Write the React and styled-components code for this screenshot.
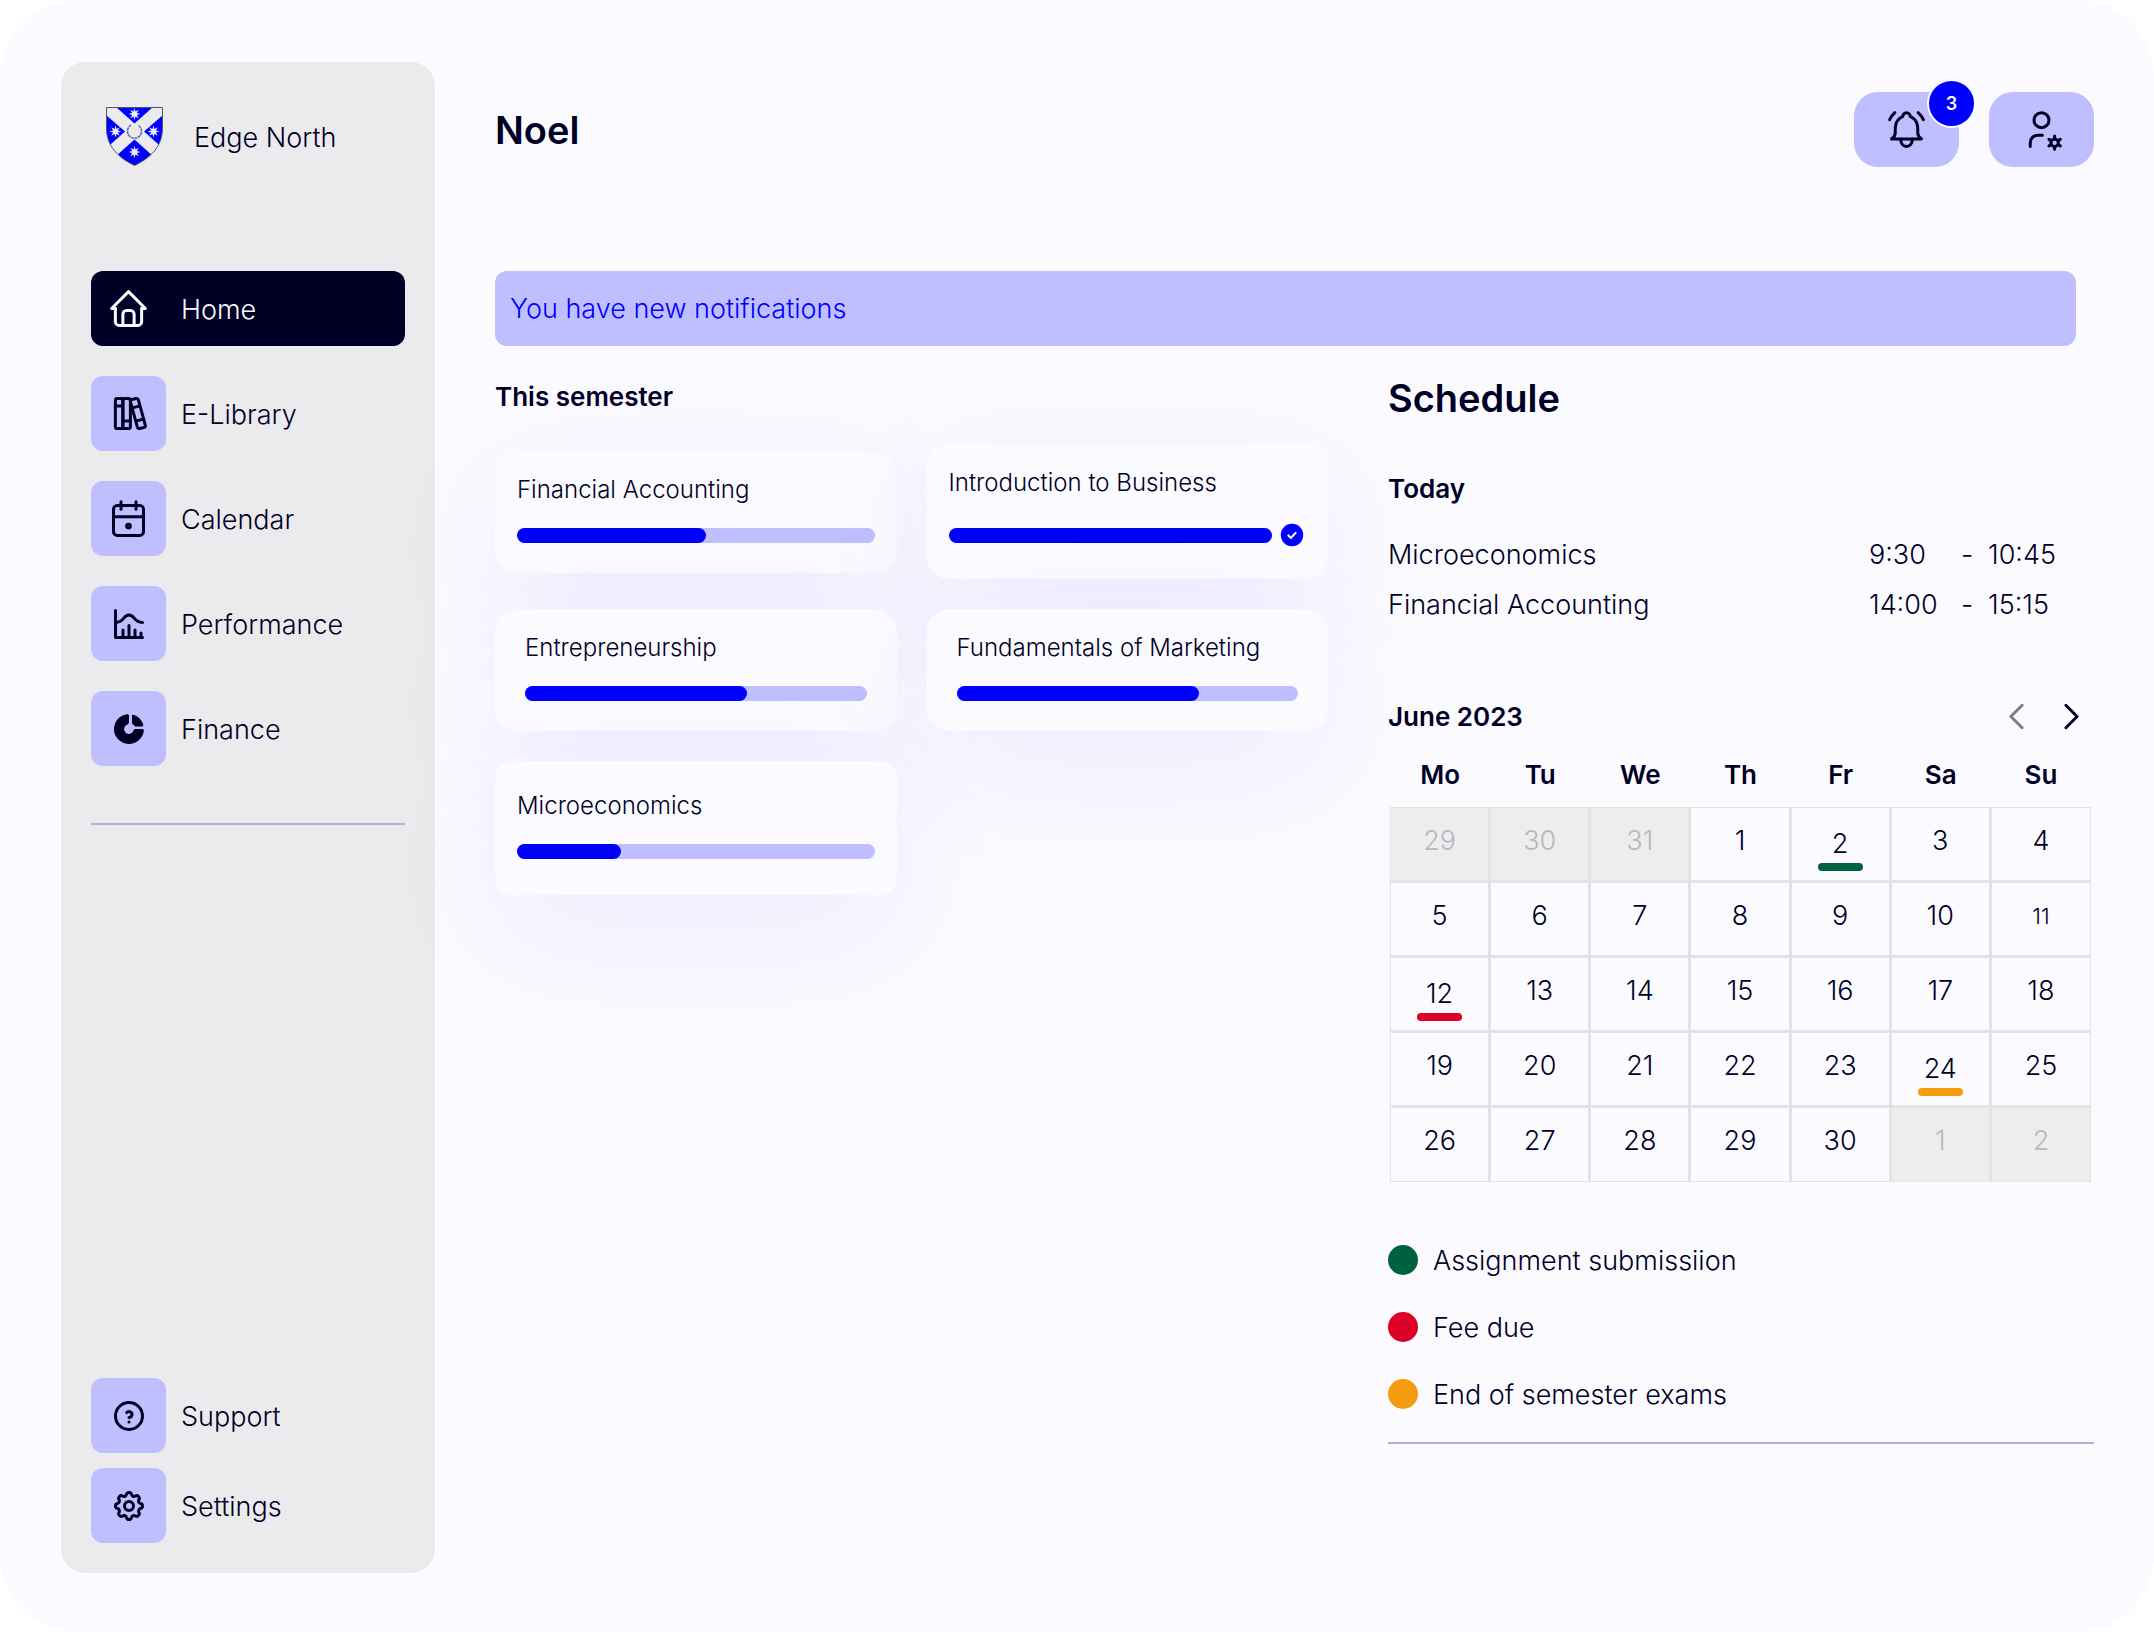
import React from "react";
import styled, { createGlobalStyle, css } from "styled-components";

const c = {
  ink: "#000026",
  blue: "#0000ff",
  lilac: "#bfbfff",
  paper: "#fbfaff",
  grey: "#ebebed",
  cellGrey: "#ededed",
  cellLine: "#e3e3e3",
  muted: "#b7b7c1",
  rule: "#b0b0d6",
  green: "#00613f",
  red: "#db0025",
  amber: "#f39c0f",
};

const GlobalStyle = createGlobalStyle`
  *, *::before, *::after { box-sizing: border-box; }
  body {
    margin: 0;
    background: #ffffff;
    color: ${c.ink};
    font-family: Inter, "Open Sans", sans-serif;
    font-size: 27px;
    line-height: 36px;
    font-weight: 350;
  }
  h1, h2, h3, p, ul { margin: 0; padding: 0; }
  ul { list-style: none; }
  a { color: inherit; text-decoration: none; }
  button { font: inherit; color: inherit; border: 0; padding: 0; cursor: pointer; }
`;

const Page = styled.div`
  display: flex;
  gap: 60px;
  min-height: 100vh;
  padding: 62px 60px 59px 61px;
  border-radius: 76px;
  background: ${c.paper};
`;

const Sidebar = styled.aside`
  display: flex;
  flex-direction: column;
  flex: 0 0 374px;
  padding: 45px 30px 30px;
  border-radius: 24px;
  background: ${c.grey};
`;

const Label = styled.span`
  padding-top: 2px;
`;

const Brand = styled.a`
  display: flex;
  align-items: center;
  gap: 31px;
  margin-bottom: 105px;
  padding-left: 15px;
`;

const NavList = styled.ul`
  display: flex;
  flex-direction: column;
  gap: ${(p) => p.$gap}px;
`;

const NavIcon = styled.span`
  display: grid;
  place-items: center;
  width: 75px;
  height: 75px;
  border-radius: 12px;
  background: ${c.lilac};
`;

const NavLink = styled.a`
  display: flex;
  align-items: center;
  gap: 15px;
  border-radius: 12px;
  ${(p) =>
    p.$active &&
    css`
      background: ${c.ink};
      color: ${c.paper};
      ${NavIcon} {
        background: transparent;
      }
    `}
`;

const Rule = styled.hr`
  width: 100%;
  height: 2px;
  margin: ${(p) => p.$top}px 0 0;
  border: 0;
  background: ${c.rule};
`;

const SidebarFoot = styled.nav`
  margin-top: auto;
`;

const Main = styled.main`
  flex: 1;
  min-width: 0;
  padding-top: 30px;
`;

const Header = styled.header`
  display: flex;
  align-items: center;
  justify-content: space-between;
  margin-bottom: 104px;
`;

const Title = styled.h1`
  font-size: 38px;
  line-height: 44px;
  font-weight: 600;
`;

const Subtitle = styled.h3`
  font-size: 26px;
  line-height: 36px;
  font-weight: 600;
`;

const Actions = styled.div`
  display: flex;
  gap: 30px;
`;

const ActionButton = styled.button`
  position: relative;
  display: grid;
  place-items: center;
  width: 105px;
  height: 75px;
  border-radius: 24px;
  background: ${c.lilac};
`;

const Badge = styled.span`
  position: absolute;
  top: -13px;
  right: -17px;
  display: grid;
  place-items: center;
  width: 49px;
  height: 49px;
  border: 2px solid ${c.paper};
  border-radius: 50%;
  background: ${c.blue};
  color: ${c.paper};
  font-size: 18px;
  font-weight: 600;
`;

const Banner = styled.p`
  display: flex;
  align-items: center;
  height: 75px;
  margin-right: 18px;
  padding: 0 15px;
  border-radius: 12px;
  background: ${c.lilac};
  color: ${c.blue};
`;

const Content = styled.div`
  display: grid;
  grid-template-columns: minmax(0, 833fr) minmax(0, 706fr);
  gap: 60px;
  align-items: start;
  padding-top: 30px;
`;

const Courses = styled.section`
  padding-top: 3px;
`;

const CourseGrid = styled.div`
  display: grid;
  grid-template-columns: 1fr 1fr;
  align-items: center;
  gap: 30px;
  margin-top: 29px;
`;

const CourseCard = styled.article`
  padding: ${(p) => (p.$tall ? "30px" : "24px")} ${(p) => (p.$inset ? "30px" : "22px")}
    ${(p) => (p.$tall ? "36px" : "30px")};
  border-radius: ${(p) => (p.$tall ? "18px" : "22px")};
  background: ${c.paper};
  box-shadow: 0 36px 135px rgba(0, 0, 255, 0.065);
`;

const CourseName = styled.h3`
  margin-bottom: 23px;
  font-size: 24px;
  line-height: 30px;
  font-weight: 350;
`;

const ProgressRow = styled.div`
  display: flex;
  align-items: center;
  gap: 6px;
`;

const Track = styled.div`
  flex: 1;
  height: 15px;
  border-radius: 8px;
  background: ${c.lilac};
`;

const Fill = styled.div`
  height: 100%;
  border-radius: 8px;
  background: ${c.blue};
`;

const Today = styled.div`
  margin-top: 51px;
`;

const Lessons = styled.ul`
  display: flex;
  flex-direction: column;
  gap: 14px;
  margin-top: 30px;
`;

const Lesson = styled.li`
  display: grid;
  grid-template-columns: 1fr 92px 27px 106px;
`;

const MonthBar = styled.div`
  display: flex;
  align-items: center;
  justify-content: space-between;
  height: 45px;
  margin-top: 71px;
`;

const MonthButtons = styled.div`
  display: flex;
  gap: 10px;
`;

const MonthButton = styled.button`
  display: grid;
  width: 45px;
  height: 45px;
  background: transparent;
  &:disabled {
    color: ${c.ink};
    opacity: 0.5;
    cursor: default;
  }
`;

const CalendarWrap = styled.div`
  padding: 0 3px 0 2px;
`;

const Calendar = styled.table`
  width: 100%;
  table-layout: fixed;
  border-collapse: separate;
  border-spacing: 0;
`;

const WeekDay = styled.th`
  height: 68px;
  padding: 4px 0 0;
  font-size: 26px;
  font-weight: 600;
  text-align: center;
`;

const Day = styled.td`
  height: 75px;
  padding: ${(p) => (p.$marked ? "18px" : "15px")} 0 0;
  border: 1px solid ${c.cellLine};
  border-width: 1px 2px 2px 1px;
  background: ${(p) => (p.$outside ? c.cellGrey : "transparent")};
  color: ${(p) => (p.$outside ? c.muted : c.ink)};
  font-size: ${(p) => (p.$small ? "22px" : "27px")};
  line-height: 36px;
  text-align: center;
  vertical-align: top;
  &:last-child {
    border-right-width: 1px;
  }
  tr:last-child > & {
    border-bottom-width: 1px;
  }
`;

const Marker = styled.span`
  display: block;
  width: 45px;
  height: 8px;
  margin: 1px auto 0;
  border-radius: 4px;
  background: ${(p) => p.$color};
`;

const Legend = styled.ul`
  display: flex;
  flex-direction: column;
  gap: 29px;
  margin-top: 59px;
`;

const LegendItem = styled.li`
  display: flex;
  align-items: center;
  gap: 15px;
  &::before {
    content: "";
    width: 30px;
    height: 30px;
    border-radius: 50%;
    background: ${(p) => p.$color};
  }
`;

const icons = {
  home: ["M5 12H3l9-9 9 9h-2", "M5 12v7a2 2 0 0 0 2 2h10a2 2 0 0 0 2-2v-7", "M9 21v-6a2 2 0 0 1 2-2h2a2 2 0 0 1 2 2v6"],
  books: [
    "M5 5a1 1 0 0 1 1-1h2a1 1 0 0 1 1 1v14a1 1 0 0 1-1 1H6a1 1 0 0 1-1-1z",
    "M9 5a1 1 0 0 1 1-1h2a1 1 0 0 1 1 1v14a1 1 0 0 1-1 1h-2a1 1 0 0 1-1-1z",
    "M5 8h4",
    "M9 16h4",
    "M13.803 4.56l2.184-.53c.562-.135 1.133.19 1.282.732l3.695 13.418a1.02 1.02 0 0 1-.634 1.219l-.133.041-2.184.53c-.562.135-1.133-.19-1.282-.732L13.036 5.82a1.02 1.02 0 0 1 .634-1.219z",
    "M14 9l4-1",
    "M16 16l3.923-.98",
  ],
  calendar: [
    "M4 7a2 2 0 0 1 2-2h12a2 2 0 0 1 2 2v12a2 2 0 0 1-2 2H6a2 2 0 0 1-2-2z",
    "M16 3v4",
    "M8 3v4",
    "M4 11h16",
    "M11 16a1 1 0 1 0 2 0a1 1 0 1 0-2 0",
  ],
  histogram: ["M3 3v18h18", "M20 18v3", "M16 16v5", "M12 13v8", "M8 16v5", "M3 11c6 0 5-5 9-5s3 5 9 5"],
  help: ["M3 12a9 9 0 1 0 18 0a9 9 0 1 0-18 0", "M12 16v.01", "M12 13a2 2 0 0 0 .914-3.782a1.98 1.98 0 0 0-2.414.483"],
  settings: [
    "M10.325 4.317c.426-1.756 2.924-1.756 3.35 0a1.724 1.724 0 0 0 2.573 1.066c1.543-.94 3.31.826 2.37 2.37a1.724 1.724 0 0 0 1.065 2.572c1.756.426 1.756 2.924 0 3.35a1.724 1.724 0 0 0-1.066 2.573c.94 1.543-.826 3.31-2.37 2.37a1.724 1.724 0 0 0-2.572 1.065c-.426 1.756-2.924 1.756-3.35 0a1.724 1.724 0 0 0-2.573-1.066c-1.543.94-3.31-.826-2.37-2.37a1.724 1.724 0 0 0-1.065-2.572c-1.756-.426-1.756-2.924 0-3.35a1.724 1.724 0 0 0 1.066-2.573c-.94-1.543.826-3.31 2.37-2.37c1 .608 2.296.07 2.572-1.065z",
    "M9 12a3 3 0 1 0 6 0a3 3 0 0 0-6 0",
  ],
  bell: [
    "M10 5a2 2 0 0 1 4 0a7 7 0 0 1 4 6v3a4 4 0 0 0 2 3H4a4 4 0 0 0 2-3v-3a7 7 0 0 1 4-6",
    "M9 17v1a3 3 0 0 0 6 0v-1",
    "M21 6.727a11.05 11.05 0 0 0-2.794-3.727",
    "M3 6.727a11.05 11.05 0 0 1 2.792-3.727",
  ],
  userCog: [
    "M8 7a4 4 0 1 0 8 0a4 4 0 0 0-8 0",
    "M6 21v-2a4 4 0 0 1 4-4h2.5",
    "M17 19a2 2 0 1 0 4 0a2 2 0 1 0-4 0",
    "M19 15.5V17",
    "M19 21v1.5",
    "M22.032 17.25l-1.299.75",
    "M17.27 20l-1.3.75",
    "M15.97 17.25l1.3.75",
    "M20.733 20l1.3.75",
  ],
  prev: ["M15 6l-6 6 6 6"],
  next: ["M9 6l6 6-6 6"],
};

function Icon({ name, size = 45, stroke = 1.6 }) {
  return (
    <svg
      width={size}
      height={size}
      viewBox="0 0 24 24"
      fill="none"
      stroke="currentColor"
      strokeWidth={stroke}
      strokeLinecap="round"
      strokeLinejoin="round"
      aria-hidden="true"
    >
      {icons[name].map((d) => (
        <path key={d} d={d} />
      ))}
    </svg>
  );
}

function DonutIcon() {
  return (
    <svg width="36" height="36" viewBox="0 0 24 24" fill="currentColor" aria-hidden="true">
      <path d="M10.6 2.1C11.4 2 12 2.4 12 3.2V7.4C12 8.1 11.7 8.6 11 9A3.2 3.2 0 1 0 15 13C15.3 12.3 15.9 12 16.6 12H20.8C21.6 12 22 12.6 21.9 13.4A10 10 0 1 1 10.6 2.1Z" />
      <path d="M15 2.5A10 10 0 0 1 21.5 9C21.7 9.8 21.3 10.4 20.5 10.4H16C15.6 9.7 14.8 8.8 14 8.3V3.4C13.9 2.6 14.3 2.3 15 2.5Z" />
    </svg>
  );
}

function CheckIcon() {
  return (
    <svg width="28" height="28" viewBox="0 0 28 28" role="img" aria-label="Completed">
      <circle cx="14" cy="14" r="11.2" fill={c.blue} />
      <path d="M10.4 14.4l2.5 2.5 4.7-5" fill="none" stroke={c.paper} strokeWidth="2.1" strokeLinecap="round" strokeLinejoin="round" />
    </svg>
  );
}

const starPoints = Array.from({ length: 16 }, (_, i) => {
  const r = i % 2 ? 2.6 : 6;
  const a = (i * Math.PI) / 8;
  return `${(r * Math.sin(a)).toFixed(2)},${(-r * Math.cos(a)).toFixed(2)}`;
}).join(" ");

function Crest() {
  const shield = "M.5.5H56.5V21C56.5 40 44 51 28.5 58.5C13 51 .5 40 .5 21Z";
  return (
    <svg width="57" height="59" viewBox="0 0 57 59" aria-hidden="true">
      <clipPath id="crest-shield">
        <path d={shield} />
      </clipPath>
      <g clipPath="url(#crest-shield)" fill={c.blue}>
        <path d="M10 0H47L28.5 16.5Z" />
        <path d="M0 8L19 24.5L0 41.5Z" />
        <path d="M57 8L38 24.5L57 41.5Z" />
        <path d="M28.5 32.5L58 59H-1Z" />
      </g>
      <path d={shield} fill="none" stroke="#55555f" strokeWidth="1" />
      <g fill={c.grey}>
        {[[28.5, 7], [9.5, 24.5], [47.5, 24.5], [28.5, 45]].map(([x, y]) => (
          <polygon key={`${x}-${y}`} points={starPoints} transform={`translate(${x} ${y})`} />
        ))}
      </g>
      <path d="M25 18.2A7 7 0 1 0 32 18.2" fill="none" stroke="#5a5aae" strokeWidth="1.4" strokeDasharray="3 .6" />
    </svg>
  );
}

const mainLinks = [
  { label: "Home", icon: <Icon name="home" />, active: true },
  { label: "E-Library", icon: <Icon name="books" /> },
  { label: "Calendar", icon: <Icon name="calendar" /> },
  { label: "Performance", icon: <Icon name="histogram" size={36} stroke={2} /> },
  { label: "Finance", icon: <DonutIcon /> },
];

const footLinks = [
  { label: "Support", icon: <Icon name="help" size={36} stroke={2} /> },
  { label: "Settings", icon: <Icon name="settings" size={36} stroke={2} /> },
];

const courses = [
  { name: "Financial Accounting", progress: 53 },
  { name: "Introduction to Business", progress: 100 },
  { name: "Entrepreneurship", progress: 65, inset: true },
  { name: "Fundamentals of Marketing", progress: 71, inset: true },
  { name: "Microeconomics", progress: 29, tall: true },
];

const lessons = [
  { name: "Microeconomics", from: "9:30", to: "10:45" },
  { name: "Financial Accounting", from: "14:00", to: "15:15" },
];

const weekDays = ["Mo", "Tu", "We", "Th", "Fr", "Sa", "Su"];

const weeks = [
  [29, 30, 31, 1, 2, 3, 4],
  [5, 6, 7, 8, 9, 10, 11],
  [12, 13, 14, 15, 16, 17, 18],
  [19, 20, 21, 22, 23, 24, 25],
  [26, 27, 28, 29, 30, 1, 2],
];

const events = { 2: c.green, 12: c.red, 24: c.amber };

const legend = [
  { label: "Assignment submissiion", color: c.green },
  { label: "Fee due", color: c.red },
  { label: "End of semester exams", color: c.amber },
];

function NavItems({ links, gap }) {
  return (
    <NavList $gap={gap}>
      {links.map((link) => (
        <li key={link.label}>
          <NavLink href="#" $active={link.active} aria-current={link.active ? "page" : undefined}>
            <NavIcon>{link.icon}</NavIcon>
            <Label>{link.label}</Label>
          </NavLink>
        </li>
      ))}
    </NavList>
  );
}

function Course({ name, progress, inset, tall }) {
  return (
    <CourseCard $inset={inset} $tall={tall}>
      <CourseName>{name}</CourseName>
      <ProgressRow>
        <Track role="progressbar" aria-label={name} aria-valuenow={progress} aria-valuemin={0} aria-valuemax={100}>
          <Fill style={{ width: `${progress}%` }} />
        </Track>
        {progress === 100 && <CheckIcon />}
      </ProgressRow>
    </CourseCard>
  );
}

function MonthTable() {
  return (
    <Calendar>
      <thead>
        <tr>
          {weekDays.map((d) => (
            <WeekDay key={d} scope="col">
              {d}
            </WeekDay>
          ))}
        </tr>
      </thead>
      <tbody>
        {weeks.map((week, w) => (
          <tr key={w}>
            {week.map((day) => {
              const outside = (w === 0 && day > 7) || (w === 4 && day < 7);
              const color = outside ? undefined : events[day];
              return (
                <Day key={day} $outside={outside} $marked={Boolean(color)} $small={day === 11}>
                  {day}
                  {color && <Marker $color={color} />}
                </Day>
              );
            })}
          </tr>
        ))}
      </tbody>
    </Calendar>
  );
}

export default function App() {
  return (
    <>
      <GlobalStyle />
      <Page>
        <Sidebar>
          <Brand href="#">
            <Crest />
            <Label>Edge North</Label>
          </Brand>
          <nav aria-label="Main">
            <NavItems links={mainLinks} gap={30} />
          </nav>
          <Rule $top={57} />
          <SidebarFoot aria-label="Help">
            <NavItems links={footLinks} gap={15} />
          </SidebarFoot>
        </Sidebar>
        <Main>
          <Header>
            <Title>Noel</Title>
            <Actions>
              <ActionButton type="button" aria-label="Notifications">
                <Icon name="bell" />
                <Badge>3</Badge>
              </ActionButton>
              <ActionButton type="button" aria-label="Account">
                <Icon name="userCog" />
              </ActionButton>
            </Actions>
          </Header>
          <Banner role="status">You have new notifications</Banner>
          <Content>
            <Courses>
              <Subtitle as="h2">This semester</Subtitle>
              <CourseGrid>
                {courses.map((course) => (
                  <Course key={course.name} {...course} />
                ))}
              </CourseGrid>
            </Courses>
            <section>
              <Title as="h2">Schedule</Title>
              <Today>
                <Subtitle>Today</Subtitle>
                <Lessons>
                  {lessons.map((l) => (
                    <Lesson key={l.name}>
                      <span>{l.name}</span>
                      <time>{l.from}</time>
                      <span>-</span>
                      <time>{l.to}</time>
                    </Lesson>
                  ))}
                </Lessons>
              </Today>
              <MonthBar>
                <Subtitle>June 2023</Subtitle>
                <MonthButtons>
                  <MonthButton type="button" aria-label="Previous month" disabled>
                    <Icon name="prev" />
                  </MonthButton>
                  <MonthButton type="button" aria-label="Next month">
                    <Icon name="next" />
                  </MonthButton>
                </MonthButtons>
              </MonthBar>
              <CalendarWrap>
                <MonthTable />
              </CalendarWrap>
              <Legend>
                {legend.map((item) => (
                  <LegendItem key={item.label} $color={item.color}>
                    <Label>{item.label}</Label>
                  </LegendItem>
                ))}
              </Legend>
              <Rule $top={29} />
            </section>
          </Content>
        </Main>
      </Page>
    </>
  );
}
